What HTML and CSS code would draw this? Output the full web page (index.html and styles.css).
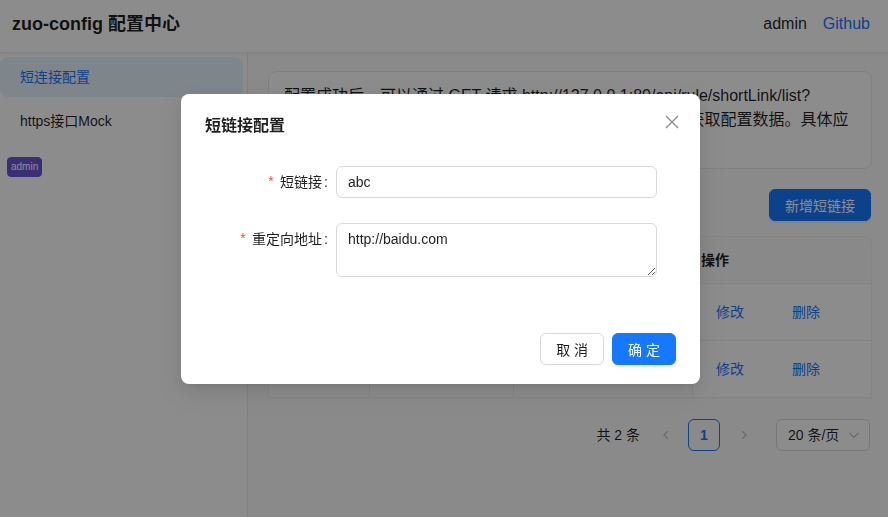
FILE: index.html
```html
<!DOCTYPE html>
<html lang="zh-CN">
<head>
<meta charset="utf-8">
<title>zuo-config 配置中心</title>
<link rel="stylesheet" href="styles.css">
</head>
<body>
<header class="topbar">
  <div class="brand">zuo-config 配置中心</div>
  <div class="user">
    <span>admin</span>
    <a class="link" href="#">Github</a>
  </div>
</header>
<div class="layout">
  <aside class="sider">
    <ul class="menu">
      <li class="menu-item active">短连接配置</li>
      <li class="menu-item">https接口Mock</li>
    </ul>
    <span class="tag">admin</span>
  </aside>
  <main class="content">
    <div class="notice">配置成功后，可以通过 GET 请求 http://127.0.0.1:80/api/rule/shortLink/list? appName=config1&amp;env=prod 的方式，可从配置中心服务获取配置数据。具体应用方式请参考文档。</div>
    <div class="toolbar">
      <button class="btn btn-primary">新增短链接</button>
    </div>
    <table class="table">
      <colgroup>
        <col class="c1"><col class="c2"><col class="c3"><col class="c4">
      </colgroup>
      <thead>
        <tr><th>短链接</th><th>重定向地址</th><th>创建时间</th><th>操作</th></tr>
      </thead>
      <tbody>
        <tr><td>abc</td><td>http://baidu.com</td><td>2024-01-01</td><td><div class="actions"><a class="btn-link" href="#">修改</a><a class="btn-link" href="#">删除</a></div></td></tr>
        <tr><td>def</td><td>http://qq.com</td><td>2024-01-02</td><td><div class="actions"><a class="btn-link" href="#">修改</a><a class="btn-link" href="#">删除</a></div></td></tr>
      </tbody>
    </table>
    <div class="pagination">
      <span class="total">共 2 条</span>
      <span class="page-arrow"><svg width="12" height="12" viewBox="0 0 12 12"><path d="M7.8 2.2 4 6l3.8 3.8" fill="none" stroke="currentColor" stroke-width="1.2"/></svg></span>
      <span class="page-item current">1</span>
      <span class="page-arrow"><svg width="12" height="12" viewBox="0 0 12 12"><path d="M4.2 2.2 8 6l-3.8 3.8" fill="none" stroke="currentColor" stroke-width="1.2"/></svg></span>
      <span class="select">20 条/页<svg class="select-arrow" width="12" height="12" viewBox="0 0 12 12"><path d="M1.5 4 6 8.5 10.5 4" fill="none" stroke="currentColor" stroke-width="1.1"/></svg></span>
    </div>
  </main>
</div>

<div class="mask"></div>
<div class="modal">
  <button class="modal-close" aria-label="close"><svg width="14" height="14" viewBox="0 0 14 14"><path d="M1 1l12 12M13 1L1 13" stroke="currentColor" stroke-width="1.3" fill="none"/></svg></button>
  <div class="modal-title">短链接配置</div>
  <form class="form">
    <div class="form-item">
      <label class="form-label"><span class="req">*</span>短链接</label>
      <input class="input" type="text" value="abc">
    </div>
    <div class="form-item">
      <label class="form-label"><span class="req">*</span>重定向地址</label>
      <textarea class="input textarea" rows="2">http://baidu.com</textarea>
    </div>
  </form>
  <div class="modal-footer">
    <button class="btn btn-default">取 消</button>
    <button class="btn btn-primary">确 定</button>
  </div>
</div>
</body>
</html>
```

FILE: styles.css
```css
html, body {
  margin: 0;
  padding: 0;
}

body {
  width: 888px;
  height: 517px;
  overflow: hidden;
  font-family: "Liberation Sans", "Noto Sans CJK SC", sans-serif;
  font-size: 14px;
  line-height: 22px;
  color: rgba(0, 0, 0, 0.88);
  background: #fff;
}

a {
  text-decoration: none;
}

.link {
  color: #1677ff;
}

/* header */
.topbar {
  height: 53px;
  box-sizing: border-box;
  padding: 0 18px 4px 12px;
  display: flex;
  align-items: center;
  justify-content: space-between;
  background: #fff;
  box-shadow: 0 1px 4px rgba(0, 21, 41, 0.08);
  border-bottom: 1px solid #f0f0f0;
  position: relative;
  z-index: 1;
}

.brand {
  font-size: 18px;
  font-weight: 700;
  color: rgba(0, 0, 0, 0.88);
}

.user {
  display: flex;
  gap: 16px;
  font-size: 16px;
}

/* layout */
.layout {
  display: flex;
  height: 464px;
}

.sider {
  width: 247px;
  border-right: 1px solid rgba(5, 5, 5, 0.08);
  padding-top: 4px;
  background: #fff;
  flex-shrink: 0;
}

.menu {
  list-style: none;
  margin: 0;
  padding: 0;
}

.menu-item {
  height: 40px;
  line-height: 40px;
  padding-left: 20px;
  margin: 0 4px 4px 0;
  border-radius: 8px;
  color: rgba(0, 0, 0, 0.88);
}

.menu-item.active {
  background: #e6f4ff;
  color: #1677ff;
}

.tag {
  display: inline-block;
  margin: 12px 0 0 7px;
  padding: 0 3px;
  height: 18px;
  line-height: 18px;
  font-size: 10px;
  color: #fff;
  background: #6a55d8;
  border: 1px solid #6a55d8;
  border-radius: 4px;
}

.content {
  flex: 1;
  padding: 18px 17px 0 20px;
  background: #fcfcfc;
}

.notice {
  border: 1px solid #ebebeb;
  border-radius: 8px;
  padding: 12px 15px;
  font-size: 16px;
  line-height: 24px;
  background: #fff;
}

.toolbar {
  display: flex;
  justify-content: flex-end;
  margin-top: 20px;
  padding-right: 1px;
}

/* buttons */
.btn {
  height: 32px;
  padding: 0 15px;
  border-radius: 6px;
  font-family: inherit;
  font-size: 14px;
  cursor: pointer;
  border: 1px solid transparent;
}

.btn-primary {
  background: #1677ff;
  border-color: #1677ff;
  color: #fff;
  box-shadow: 0 2px 0 rgba(5, 145, 255, 0.1);
}

.btn-default {
  background: #fff;
  border-color: #d9d9d9;
  color: rgba(0, 0, 0, 0.88);
  box-shadow: 0 2px 0 rgba(0, 0, 0, 0.02);
}

/* table */
.table {
  width: 100%;
  margin-top: 15px;
  border-collapse: separate;
  border-spacing: 0;
  table-layout: fixed;
  border-top: 1px solid #f0f0f0;
  border-left: 1px solid #f0f0f0;
  border-radius: 8px 8px 0 0;
  background: #fff;
}

.c1 { width: 101px; }
.c2 { width: 144px; }
.c3 { width: 179px; }
.c4 { width: 179px; }

.table th,
.table td {
  padding: 12px 8px;
  text-align: left;
  border-right: 1px solid #f0f0f0;
  border-bottom: 1px solid #f0f0f0;
}

.table th {
  background: #fafafa;
  font-weight: 600;
  line-height: 22px;
}

.table th:first-child {
  border-top-left-radius: 8px;
}

.table th:last-child {
  border-top-right-radius: 8px;
}

.table td {
  line-height: 32px;
}

.actions {
  display: flex;
  gap: 18px;
}

.btn-link {
  color: #1677ff;
  padding: 0 15px;
  line-height: 32px;
}

/* pagination */
.pagination {
  display: flex;
  justify-content: flex-end;
  align-items: center;
  margin-top: 21px;
  margin-right: 2px;
}

.total {
  margin-right: 10px;
}

.page-arrow,
.page-item {
  width: 32px;
  height: 32px;
  display: flex;
  align-items: center;
  justify-content: center;
  box-sizing: border-box;
  border-radius: 6px;
}

.page-arrow {
  color: rgba(0, 0, 0, 0.25);
}

.page-item.current {
  margin: 0 8px 0 6px;
  border: 1px solid #1677ff;
  color: #1677ff;
  font-weight: 600;
}

.select {
  margin-left: 16px;
  width: 94px;
  height: 32px;
  box-sizing: border-box;
  border: 1px solid #d9d9d9;
  border-radius: 6px;
  padding: 0 9px 0 11px;
  display: flex;
  align-items: center;
  justify-content: space-between;
  background: #fff;
}

.select-arrow {
  color: rgba(0, 0, 0, 0.25);
}

/* mask + modal */
.mask {
  position: fixed;
  inset: 0;
  z-index: 10;
  background: rgba(0, 0, 0, 0.45);
}

.modal {
  position: fixed;
  z-index: 11;
  left: 181px;
  top: 94px;
  width: 519px;
  box-sizing: border-box;
  padding: 20px 24px 19px;
  background: #fff;
  border-radius: 8px;
  box-shadow: 0 6px 16px 0 rgba(0, 0, 0, 0.08), 0 3px 6px -4px rgba(0, 0, 0, 0.12), 0 9px 28px 8px rgba(0, 0, 0, 0.05);
}

.modal-close {
  position: absolute;
  top: 17px;
  right: 17px;
  width: 22px;
  height: 22px;
  padding: 0;
  border: 0;
  background: transparent;
  color: rgba(0, 0, 0, 0.45);
  display: flex;
  align-items: center;
  justify-content: center;
}

.modal-title {
  font-size: 16px;
  font-weight: 600;
  line-height: 24px;
}

.form {
  display: flow-root;
  margin-top: 28px;
}

.form-item {
  display: grid;
  grid-template-columns: 131px 321px;
  align-items: start;
  margin-bottom: 24px;
}

.form-label {
  text-align: right;
  line-height: 32px;
  white-space: nowrap;
}

.form-label::after {
  content: ":";
  margin: 0 8px 0 2px;
}

.req {
  color: #ff4d4f;
  margin-right: 5px;
  font-family: "Liberation Mono", monospace;
  font-size: 14px;
}

.input {
  width: 100%;
  height: 32px;
  box-sizing: border-box;
  margin: 0;
  border: 1px solid #d9d9d9;
  border-radius: 6px;
  padding: 4px 11px;
  font-family: inherit;
  font-size: 14px;
  line-height: 22px;
  color: rgba(0, 0, 0, 0.88);
  background: #fff;
}

.textarea {
  height: 54px;
  display: block;
  resize: vertical;
}

.modal-footer {
  display: flex;
  justify-content: flex-end;
  gap: 8px;
  margin-top: 32px;
}
```
